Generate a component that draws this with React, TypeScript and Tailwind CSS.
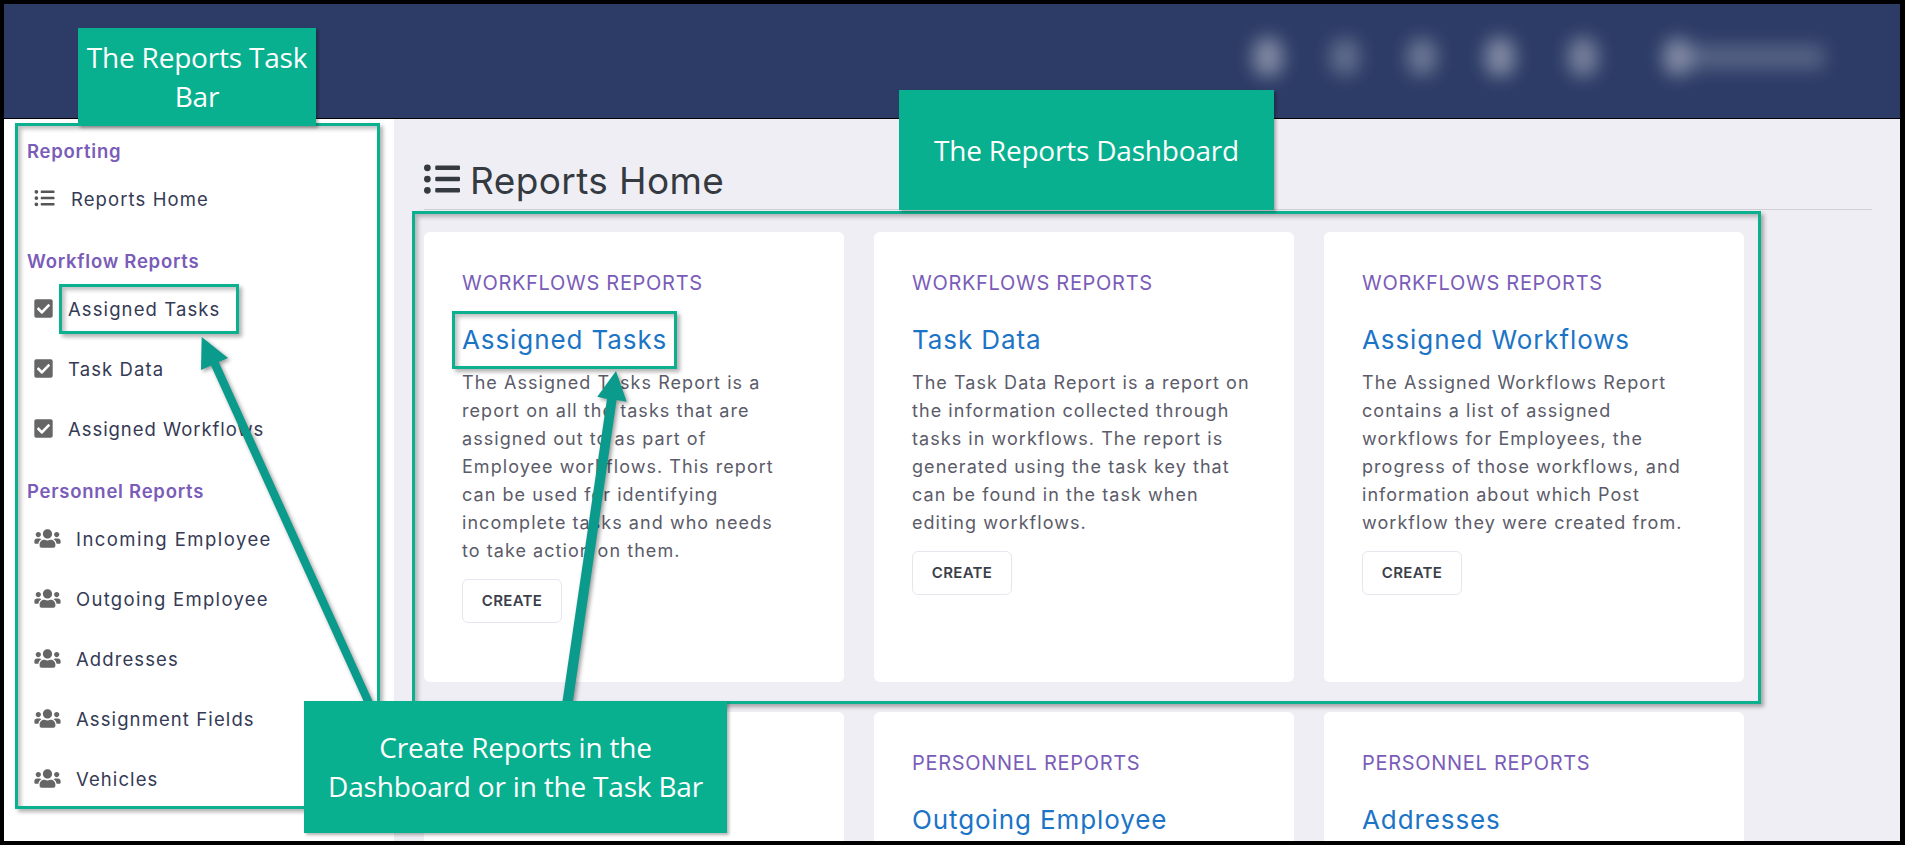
import { FaCheckSquare, FaListUl, FaUsers } from "react-icons/fa";

const font = "font-['Inter','Liberation_Sans',sans-serif]";
const callout = "font-['Open_Sans','Noto_Sans',sans-serif]";
const frameShadow =
  "shadow-[3px_3px_4px_rgba(0,0,0,0.3),inset_3px_3px_4px_rgba(0,0,0,0.25)]";

function SectionLabel({ children, top }: { children: string; top: string }) {
  return (
    <div className={`${top} flex h-[30px] items-center pl-[23px] text-[18.5px] font-semibold tracking-[0.75px] text-[#7a5cb9]`}>
      {children}
    </div>
  );
}

function SideItem({
  icon,
  label,
  gap,
  track = "tracking-[1.1px]",
}: {
  icon: React.ReactNode;
  label: string;
  gap: string;
  track?: string;
}) {
  return (
    <div className={`flex h-[60px] items-center pl-[30px] text-[18.5px] text-[#353a55] ${track}`}>
      <span className={`flex items-center ${gap}`}>{icon}</span>
      <span>{label}</span>
    </div>
  );
}

const workflowIcon = <FaCheckSquare className="-mt-[3px] h-[21px] w-[19px] text-[#666666]" />;
const peopleIcon = <FaUsers className="-mt-[3px] h-[21px] w-[27px] text-[#666666]" />;

function Card({ eyebrow, title, lines }: { eyebrow?: string; title?: string; lines?: string[] }) {
  return (
    <div className="h-[450px] rounded-[6px] bg-white pl-[38px] pt-[36px]">
      {eyebrow && (
        <div className="flex h-[30px] items-center text-[20px] tracking-[0.7px] text-[#7a5cb9]">{eyebrow}</div>
      )}
      {title && (
        <div className="mt-[21px] flex h-[40px] items-center text-[26px] tracking-[0.9px] text-[#1c74c6]">{title}</div>
      )}
      {lines && (
        <>
          <p className="mt-[10px] text-[18px] leading-[28px] tracking-[1.05px] text-[#5b5b69]">
            {lines.map((l) => (
              <span key={l} className="block whitespace-nowrap">{l}</span>
            ))}
          </p>
          <button className="mt-[14px] flex h-[44px] w-[100px] items-center justify-center rounded-[6px] border border-[#e6e6ef] bg-white text-[15px] font-semibold tracking-[0.3px] text-[#3a3f4a]">
            CREATE
          </button>
        </>
      )}
    </div>
  );
}

export default function App() {
  return (
    <div className={`relative h-[845px] w-[1905px] overflow-hidden bg-black pb-[4px] pl-[4px] pr-[5px] pt-[4px] ${font}`}>
      <div className="flex h-full flex-col">
        <header className="flex h-[114px] shrink-0 items-start bg-[#2d3c67] pt-[33px]">
          <div className="ml-auto flex items-center pr-[76px] blur-[9px]">
            <span className="mr-[47px] h-[40px] w-[30px] rounded-full bg-white/40" />
            <span className="mr-[47px] h-[38px] w-[30px] rounded-full bg-white/25" />
            <span className="mr-[48px] h-[38px] w-[30px] rounded-full bg-white/30" />
            <span className="mr-[53px] h-[40px] w-[30px] rounded-full bg-white/40" />
            <span className="mr-[65px] h-[40px] w-[30px] rounded-full bg-white/35" />
            <span className="flex items-center">
              <span className="h-[38px] w-[30px] rounded-full bg-white/40" />
              <span className="h-[24px] w-[131px] bg-white/20" />
            </span>
          </div>
        </header>
        <div className="h-px shrink-0 bg-black" />
        <div className="flex min-h-0 flex-1">
          <aside className="w-[390px] shrink-0 bg-white pt-[18px]">
            <SectionLabel top="">Reporting</SectionLabel>
            <div className="mt-[3px]">
              <SideItem icon={<FaListUl className="-mt-[4px] h-[20px] w-[21px] text-[#555555]" />} gap="mr-[16px]" label="Reports Home" />
            </div>
            <SectionLabel top="mt-[17px]">Workflow Reports</SectionLabel>
            <div className="mt-[3px]">
              <SideItem icon={workflowIcon} gap="mr-[15px]" label="Assigned Tasks" />
              <SideItem icon={workflowIcon} gap="mr-[15px]" label="Task Data" />
              <SideItem icon={workflowIcon} gap="mr-[15px]" label="Assigned Workflows" track="tracking-[0.95px]" />
            </div>
            <SectionLabel top="mt-[17px]">Personnel Reports</SectionLabel>
            <div className="mt-[3px]">
              <SideItem icon={peopleIcon} gap="mr-[15px]" label="Incoming Employee" track="tracking-[1.45px]" />
              <SideItem icon={peopleIcon} gap="mr-[15px]" label="Outgoing Employee" track="tracking-[1.3px]" />
              <SideItem icon={peopleIcon} gap="mr-[15px]" label="Addresses" />
              <SideItem icon={peopleIcon} gap="mr-[15px]" label="Assignment Fields" />
              <SideItem icon={peopleIcon} gap="mr-[15px]" label="Vehicles" />
            </div>
          </aside>
          <main className="min-w-0 flex-1 overflow-hidden bg-[#efeef4] pl-[30px] pr-[28px]">
            <div className="flex h-[91px] items-center gap-[10px] border-b border-[#cfcfd4] pt-[34px] text-[37px] tracking-[0.4px] text-[#343a40]">
              <FaListUl className="-mt-[4px] h-[36px] w-[36px]" />
              <h1>Reports Home</h1>
            </div>
            <div className="mt-[22px] grid grid-cols-[420px_420px_420px] gap-[30px]">
              <Card
                eyebrow="WORKFLOWS REPORTS"
                title="Assigned Tasks"
                lines={[
                  "The Assigned Tasks Report is a",
                  "report on all the tasks that are",
                  "assigned out to as part of",
                  "Employee workflows. This report",
                  "can be used for identifying",
                  "incomplete tasks and who needs",
                  "to take action on them.",
                ]}
              />
              <Card
                eyebrow="WORKFLOWS REPORTS"
                title="Task Data"
                lines={[
                  "The Task Data Report is a report on",
                  "the information collected through",
                  "tasks in workflows. The report is",
                  "generated using the task key that",
                  "can be found in the task when",
                  "editing workflows.",
                ]}
              />
              <Card
                eyebrow="WORKFLOWS REPORTS"
                title="Assigned Workflows"
                lines={[
                  "The Assigned Workflows Report",
                  "contains a list of assigned",
                  "workflows for Employees, the",
                  "progress of those workflows, and",
                  "information about which Post",
                  "workflow they were created from.",
                ]}
              />
              <Card />
              <Card eyebrow="PERSONNEL REPORTS" title="Outgoing Employee" />
              <Card eyebrow="PERSONNEL REPORTS" title="Addresses" />
            </div>
          </main>
        </div>
      </div>

      {/* Annotation layer */}
      <div className={`absolute left-[15px] top-[123px] h-[686px] w-[365px] border-[3px] border-[#0bb08f] ${frameShadow}`} />
      <div className={`absolute left-[412px] top-[211px] h-[493px] w-[1349px] border-[3px] border-[#0bb08f] ${frameShadow}`} />
      <div className={`absolute left-[59px] top-[284px] h-[50px] w-[180px] border-[3px] border-[#0bb08f] ${frameShadow}`} />
      <div className={`absolute left-[452px] top-[311px] h-[58px] w-[225px] border-[3px] border-[#0bb08f] ${frameShadow}`} />

      <svg className="absolute left-0 top-0 h-[845px] w-[1905px] drop-shadow-[2px_2px_2px_rgba(0,0,0,0.4)]" viewBox="0 0 1905 845">
        <polygon points="201.7,337 228,358 218.7,362 373,702 364,702 211,365.5 201,370" fill="#0b9b8c" />
        <polygon points="616,371 626.7,401.7 616.6,400 572.8,702 562.4,702 607,399 597.3,396.7" fill="#0b9b8c" />
      </svg>

      <div className={`absolute left-[78px] top-[28px] flex h-[98px] w-[238px] items-center justify-center bg-[#08b08f] text-center text-[28px] leading-[39px] tracking-[-0.2px] text-white shadow-[2px_2px_3px_rgba(0,0,0,0.3)] ${callout}`}>
        <span>The Reports Task<br />Bar</span>
      </div>
      <div className={`absolute left-[899px] top-[90px] flex h-[120px] w-[375px] items-center justify-center bg-[#08b08f] text-center text-[28px] tracking-[-0.2px] text-white shadow-[2px_2px_3px_rgba(0,0,0,0.3)] ${callout}`}>
        The Reports Dashboard
      </div>
      <div className={`absolute left-[304px] top-[701px] flex h-[132px] w-[423px] items-center justify-center bg-[#08b08f] text-center text-[28px] leading-[39px] tracking-[-0.2px] text-white shadow-[2px_2px_3px_rgba(0,0,0,0.3)] ${callout}`}>
        <span>Create Reports in the<br />Dashboard or in the Task Bar</span>
      </div>
    </div>
  );
}
